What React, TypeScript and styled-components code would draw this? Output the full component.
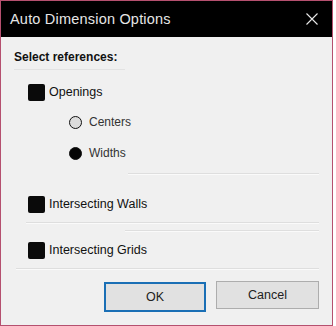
import React from "react";
import styled, { createGlobalStyle } from "styled-components";

const Global = createGlobalStyle`
  html, body {
    margin: 0;
    padding: 0;
    background: #ffffff;
    font-family: "Liberation Sans", Arial, sans-serif;
  }
`;

const Window = styled.div`
  width: 333px;
  height: 326px;
  box-sizing: border-box;
  border: 1px solid #b5506f;
  background: #f0f0f0;
  display: flex;
  flex-direction: column;
`;

const TitleBar = styled.div`
  height: 36px;
  background: #000000;
  display: flex;
  align-items: center;
  justify-content: space-between;
  padding: 0 14px 0 9px;
  color: #e6e6e6;
  font-size: 14.5px;
  letter-spacing: 0.2px;
`;

const Body = styled.div`
  flex: 1;
  display: flex;
  flex-direction: column;
  padding: 0 13px 0 13px;
`;

const Heading = styled.div`
  margin-top: 12px;
  width: 111px;
  font-size: 12px;
  font-weight: bold;
  line-height: 16px;
  padding-bottom: 4px;
  border-bottom: 1px solid #e2e2e2;
  color: #111;
`;

const CheckRow = styled.label<{ $top: number }>`
  display: flex;
  align-items: center;
  gap: 4px;
  margin-top: ${(p) => p.$top}px;
  margin-left: 14px;
  height: 18px;
  font-size: 12.5px;
  color: #111;
`;

const Box = styled.span`
  width: 17px;
  height: 17px;
  border-radius: 2px;
  background: #0a0a0a;
`;

const RadioRow = styled.label<{ $top: number }>`
  display: flex;
  align-items: center;
  gap: 7px;
  margin-top: ${(p) => p.$top}px;
  margin-left: 55px;
  height: 14px;
  font-size: 12px;
  color: #333;
`;

const Dot = styled.span<{ $on?: boolean }>`
  width: 11px;
  height: 11px;
  border-radius: 50%;
  border: 1px solid #111;
  background: ${(p) => (p.$on ? "#050505" : "#dcdcdc")};
`;

const Rule = styled.div<{ $top: number; $left: number }>`
  margin-top: ${(p) => p.$top}px;
  margin-left: ${(p) => p.$left}px;
  height: 1px;
  background: #dedede;
  box-shadow: 0 1px 0 #fafafa;
`;

const Buttons = styled.div`
  margin-top: 12px;
  display: flex;
  justify-content: flex-end;
  gap: 10px;
  padding-right: 0;
`;

const Button = styled.button<{ $primary?: boolean }>`
  width: ${(p) => (p.$primary ? "102px" : "103px")};
  height: ${(p) => (p.$primary ? "30px" : "28px")};
  margin-top: ${(p) => (p.$primary ? "1px" : "0")};
  box-sizing: border-box;
  background: #e1e1e1;
  border: ${(p) => (p.$primary ? "2px solid #1a6fb5" : "1px solid #adadad")};
  font-family: "Liberation Sans", Arial, sans-serif;
  font-size: 12.5px;
  color: #222;
  padding: 0;
`;

export default function App() {
  return (
    <>
      <Global />
      <Window>
        <TitleBar>
          <span>Auto Dimension Options</span>
          <svg width="12" height="12" viewBox="0 0 12 12">
            <path d="M0.5 0.5L11.5 11.5M11.5 0.5L0.5 11.5" stroke="#e8e8e8" strokeWidth="1.1" />
          </svg>
        </TitleBar>
        <Body>
          <Heading>Select references:</Heading>
          <CheckRow $top={13}>
            <Box />
            Openings
          </CheckRow>
          <RadioRow $top={14}>
            <Dot />
            Centers
          </RadioRow>
          <RadioRow $top={17}>
            <Dot $on />
            Widths
          </RadioRow>
          <Rule $top={13} $left={114} />
          <CheckRow $top={21}>
            <Box />
            Intersecting Walls
          </CheckRow>
          <Rule $top={9} $left={12} />
          <Rule $top={7} $left={111} />
          <CheckRow $top={10}>
            <Box />
            Intersecting Grids
          </CheckRow>
          <Rule $top={9} $left={2} />
          <Buttons>
            <Button $primary>OK</Button>
            <Button>Cancel</Button>
          </Buttons>
        </Body>
      </Window>
    </>
  );
}
